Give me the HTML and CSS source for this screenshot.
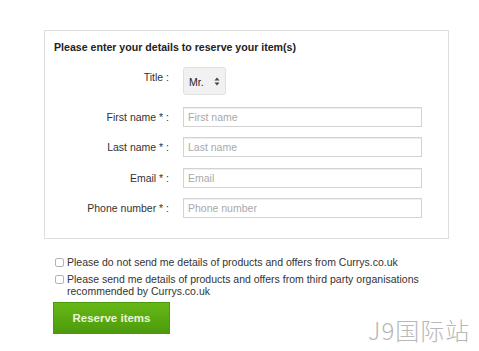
FILE: index.html
```html
<!DOCTYPE html>
<html lang="en">
<head>
  <meta charset="UTF-8">
  <title>Reserve your item</title>
  <link rel="stylesheet" href="styles.css">
</head>
<body>
  <div class="page">
    <div class="box">
      <h2 class="heading">Please enter your details to reserve your item(s)</h2>

      <div class="row row-title">
        <label class="label">Title :</label>
        <div class="select">
          <span>Mr.</span>
          <svg width="6" height="9" viewBox="0 0 6 9"><path d="M3 0.5 L5.5 3.5 H0.5 Z M3 8.5 L5.5 5.5 H0.5 Z" fill="#444"/></svg>
        </div>
      </div>

      <div class="row">
        <label class="label">First name * :</label>
        <input class="field" type="text" placeholder="First name">
      </div>
      <div class="row">
        <label class="label">Last name * :</label>
        <input class="field" type="text" placeholder="Last name">
      </div>
      <div class="row">
        <label class="label">Email * :</label>
        <input class="field" type="text" placeholder="Email">
      </div>
      <div class="row">
        <label class="label">Phone number * :</label>
        <input class="field" type="text" placeholder="Phone number">
      </div>
    </div>

    <div class="checks">
      <div class="check">
        <span class="box-tick"></span>
        <span>Please do not send me details of products and offers from Currys.co.uk</span>
      </div>
      <div class="check">
        <span class="box-tick"></span>
        <span>Please send me details of products and offers from third party organisations<br>recommended by Currys.co.uk</span>
      </div>
    </div>

    <button class="reserve">Reserve items</button>
  </div>

  <div class="watermark">J9国际站</div>
</body>
</html>
```

FILE: styles.css
```css
body {
  margin: 0;
  background: #fff;
  font-family: "Liberation Sans", Arial, sans-serif;
  color: #333;
}

.page {
  padding: 30px 0 0 44px;
}

.box {
  width: 403px;
  height: 207px;
  border: 1px solid #dedede;
  padding: 0;
}

.heading {
  margin: 10px 0 0 9px;
  font-size: 10.6px;
  line-height: 13px;
  font-weight: bold;
  color: #222;
}

.row {
  display: flex;
  align-items: center;
  margin-top: 10.4px;
}

.row-title {
  margin-top: 13px;
  align-items: flex-start;
}

.row-title + .row {
  margin-top: 12px;
}

.label {
  width: 124px;
  text-align: right;
  font-size: 10.5px;
  line-height: 20px;
  color: #333;
  margin-right: 14px;
}

.row-title .label {
  line-height: 14px;
  margin-top: 3px;
}

.select {
  height: 26px;
  border: 1px solid #e0e0e0;
  border-radius: 3px;
  background: #f1f1f1;
  display: flex;
  align-items: center;
  justify-content: space-between;
  padding: 0 5px 0 5px;
  box-sizing: content-box;
  width: 31px;
  font-size: 10.5px;
  color: #222;
}

.select span {
  margin-top: 2px;
}

.field {
  width: 239px;
  height: 20px;
  box-sizing: border-box;
  border: 1px solid #d3d3d3;
  box-shadow: inset 0 1px 1px #eee;
  padding: 0 4px;
  font-family: "Liberation Sans", Arial, sans-serif;
  font-size: 10.5px;
  color: #333;
  margin: 0;
}

.field::placeholder {
  color: #a9a9a9;
}

.checks {
  margin: 17px 0 0 11px;
}

.check {
  display: flex;
  align-items: flex-start;
  font-size: 10.5px;
  line-height: 12px;
  color: #333;
  margin-bottom: 5px;
}

.box-tick {
  width: 7px;
  height: 7px;
  border: 1px solid #b5b5b5;
  border-radius: 2px;
  background: #fff;
  margin: 2px 3px 0 0;
  flex: none;
}

.reserve {
  display: block;
  margin: 1px 0 0 9px;
  width: 117px;
  height: 32px;
  border: 1px solid #4c9a0c;
  background: linear-gradient(#66b816, #4d9b0d);
  color: #e9f6d7;
  font-family: "Liberation Sans", Arial, sans-serif;
  font-weight: bold;
  font-size: 11.5px;
  cursor: pointer;
}

.watermark {
  position: absolute;
  left: 368px;
  top: 312px;
  font-family: "Noto Sans CJK SC", sans-serif;
  font-weight: 300;
  font-size: 24px;
  color: #b8b8b8;
  letter-spacing: 1px;
}
```
